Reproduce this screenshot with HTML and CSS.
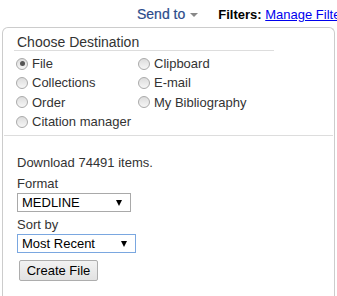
FILE: index.html
```html
<!DOCTYPE html>
<html lang="en">
<head>
  <meta charset="UTF-8">
  <title>Send to</title>
  <meta name="viewport" content="width=device-width, initial-scale=1.0">
  <link rel="stylesheet" href="styles.css">
</head>
<body>
  <div class="topbar">
    <span class="send-to">Send to <span class="caret"></span></span>
    <span class="filters"><b>Filters:</b> <a href="#">Manage Filters</a></span>
  </div>

  <div class="panel">
    <div class="dest-title">Choose Destination</div>

    <div class="dest-grid">
      <label class="opt"><input type="radio" name="dest" checked> File</label>
      <label class="opt"><input type="radio" name="dest"> Clipboard</label>
      <label class="opt"><input type="radio" name="dest"> Collections</label>
      <label class="opt"><input type="radio" name="dest"> E-mail</label>
      <label class="opt"><input type="radio" name="dest"> Order</label>
      <label class="opt"><input type="radio" name="dest"> My Bibliography</label>
      <label class="opt"><input type="radio" name="dest"> Citation manager</label>
    </div>

    <hr class="sep">

    <div class="download">
      <p class="count">Download 74491 items.</p>

      <div class="field-label">Format</div>
      <span class="select-wrap format">
        <select>
          <option>MEDLINE</option>
        </select>
      </span>

      <div class="field-label">Sort by</div>
      <span class="select-wrap sort focused">
        <select>
          <option>Most Recent</option>
        </select>
      </span>

      <div>
        <button class="create">Create File</button>
      </div>
    </div>
  </div>
</body>
</html>
```

FILE: styles.css
```css
* {
  box-sizing: border-box;
}

body {
  font-family: 'Liberation Sans', Arial, sans-serif;
  font-size: 13px;
  color: #333;
  background: #fff;
  margin: 0;
  overflow: hidden;
  white-space: nowrap;
}

.topbar {
  height: 27px;
  display: flex;
  align-items: center;
  padding-left: 137px;
  padding-top: 1px;
}

.send-to {
  font-size: 14px;
  color: #2c4b8c;
  display: flex;
  align-items: center;
  -webkit-text-stroke: 0.2px #2c4b8c;
}

.caret {
  display: inline-block;
  width: 0;
  height: 0;
  margin-left: 5px;
  margin-top: 2px;
  border-left: 4px solid transparent;
  border-right: 4px solid transparent;
  border-top: 4px solid #888;
}

.filters {
  margin-left: 20px;
  color: #000;
}

.filters a {
  color: #0000ee;
}

.panel {
  margin-left: 2px;
  width: 333px;
  height: 300px;
  border: 1px solid #ccc;
  border-bottom: none;
  border-radius: 6px 6px 0 0;
}

.dest-title {
  margin-left: 11px;
  width: 260px;
  padding: 6px 0 0 3px;
  height: 23px;
  font-size: 14px;
  line-height: 16px;
  color: #333;
  border-bottom: 1px solid #ddd;
}

.dest-grid {
  display: grid;
  grid-template-columns: 122px auto;
  padding-left: 13px;
  margin-top: 3px;
}

.opt {
  display: flex;
  align-items: center;
  height: 19.3px;
}

.opt input {
  appearance: none;
  -webkit-appearance: none;
  width: 12px;
  height: 12px;
  margin: 0 4px 0 0;
  border: 1px solid #aaa;
  border-radius: 50%;
  background: linear-gradient(#dcdcdc, #f6f6f6);
  position: relative;
}

.opt input:checked::after {
  content: "";
  position: absolute;
  left: 2.5px;
  top: 2.5px;
  width: 5px;
  height: 5px;
  border-radius: 50%;
  background: #555;
}

.sep {
  margin: 4px 1px 0;
  border: none;
  border-top: 1px solid #ddd;
}

.download {
  padding-left: 14px;
}

.count {
  margin: 19px 0 0;
  line-height: 16px;
}

.field-label {
  line-height: 16px;
  margin-top: 5px;
}

.select-wrap {
  display: inline-block;
  position: relative;
  margin-top: 1px;
}

.select-wrap select {
  appearance: none;
  -webkit-appearance: none;
  font-family: inherit;
  font-size: 13px;
  color: #000;
  height: 19px;
  padding: 0 0 0 4px;
  border: 1px solid #a9a9a9;
  background: #fff;
  border-radius: 0;
  display: block;
}

.select-wrap::after {
  content: "";
  position: absolute;
  right: 9px;
  top: 7px;
  border-left: 3.5px solid transparent;
  border-right: 3.5px solid transparent;
  border-top: 6px solid #000;
}

.format select {
  width: 114px;
}

.sort select {
  width: 119px;
}

.focused select {
  border-color: #7aa7e0;
}

.create {
  margin: 7px 0 0 2px;
  height: 21px;
  width: 79px;
  padding: 0;
  font-family: inherit;
  font-size: 13px;
  color: #000;
  border: 1px solid #adadad;
  border-radius: 2px;
  background: linear-gradient(#f2f2f2, #e2e2e2);
}
```
